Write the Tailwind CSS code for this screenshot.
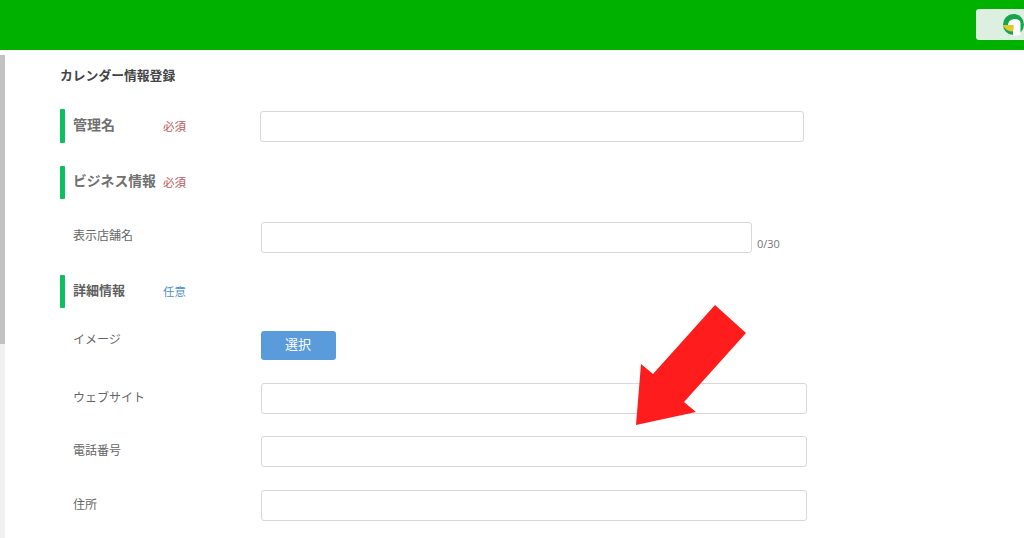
<!DOCTYPE html>
<html lang="ja">
<head>
    <meta charset="UTF-8">
    <meta name="viewport" content="width=device-width, initial-scale=1.0">
    <title>カレンダー情報登録</title>
    <script src="https://cdn.jsdelivr.net/npm/@tailwindcss/browser@4"></script>
</head>
<body class="relative h-[538px] w-[1024px] overflow-hidden bg-white font-['Noto_Sans_CJK_JP','Noto_Sans',sans-serif] text-[#666]">

    <!-- header -->
    <header class="flex h-[50px] items-start justify-end overflow-hidden bg-[#00b100] pt-[9px]">
        <div class="flex h-[31px] w-[48px] shrink-0 items-center rounded-l-[3px] bg-[#dcefe0] pl-[27px]">
            <svg class="shrink-0" width="21" height="23" viewBox="0 0 21 23">
                <circle cx="10.500" cy="11.500" r="10.500" fill="#14a64a"/>
                <path d="M5 12 C5 8 8.500 6 12 6 C15 6 17.500 7.500 17.500 10 L17.500 22 L10 23 L10 12 Z" fill="#fff"/>
                <path d="M0 12 L10.500 12 C11 14.500 10.500 17 9.500 18.500 C5 18.500 1.500 16 0 12Z" fill="#e3c82d"/>
            </svg>
        </div>
    </header>

    <div class="flex h-[488px]">
        <!-- scrollbar -->
        <div class="h-full w-[5px] shrink-0 pt-[5px]">
            <div class="h-full bg-[#f1f1f1]">
                <div class="h-[289px] bg-[#c2c2c2]"></div>
            </div>
        </div>

        <main class="pl-[55px]">
            <h1 class="mt-[16px] h-[18px] text-[12.800px] leading-[18px] font-bold text-[#444]">カレンダー情報登録</h1>

            <!-- 管理名 -->
            <div class="mt-[25px] flex h-[34px] items-center">
                <div class="h-[34px] w-[5px] rounded-[1px] bg-[#0cc05f]"></div>
                <div class="mb-[4px] ml-[8px] w-[90px] text-[14px] font-bold text-[#707070]">管理名</div>
                <div class="mt-[2px] w-[97px] text-[11.500px] text-[#c0585c]">必須</div>
                <input type="text" class="h-[31px] w-[544px] rounded-[3px] border border-[#d8d8d8] bg-white">
            </div>

            <!-- ビジネス情報 -->
            <div class="mt-[23px] flex h-[33px] items-center">
                <div class="h-[33px] w-[5px] rounded-[1px] bg-[#0cc05f]"></div>
                <div class="mb-[4px] ml-[8px] w-[90px] text-[13.800px] font-bold text-[#707070]">ビジネス情報</div>
                <div class="text-[11.500px] text-[#c0585c]">必須</div>
            </div>

            <!-- 表示店舗名 -->
            <div class="mt-[22px] flex h-[32px] items-center">
                <div class="mb-[4px] ml-[13px] w-[187.500px] text-[12px] text-[#666]">表示店舗名</div>
                <input type="text" class="h-[31px] w-[491.500px] rounded-[3px] border border-[#d8d8d8] bg-white">
                <span class="mt-[14px] ml-[5px] font-['Open_Sans',sans-serif] text-[11px] text-[#777]">0/30</span>
            </div>

            <!-- 詳細情報 -->
            <div class="mt-[22px] flex h-[33px] items-center">
                <div class="h-[33px] w-[5px] rounded-[1px] bg-[#0cc05f]"></div>
                <div class="mb-[4px] ml-[8px] w-[90px] text-[13px] font-bold text-[#5f5f5f]">詳細情報</div>
                <div class="text-[11.500px] text-[#4f8fc6]">任意</div>
            </div>

            <!-- イメージ -->
            <div class="mt-[23px] flex h-[29px] items-start">
                <div class="ml-[13px] w-[187.500px] text-[12px] leading-[16px] text-[#666]">イメージ</div>
                <button type="button" class="h-[29px] w-[75px] rounded-[3px] bg-[#5a9bdc] pb-[3px] text-[13px] text-white">選択</button>
            </div>

            <!-- ウェブサイト -->
            <div class="mt-[23px] flex h-[31px] items-center">
                <div class="mb-[4px] ml-[13px] w-[187.500px] text-[12px] text-[#666]">ウェブサイト</div>
                <input type="text" class="h-[31px] w-[546.500px] rounded-[3px] border border-[#d8d8d8] bg-white">
            </div>

            <!-- 電話番号 -->
            <div class="mt-[22px] flex h-[31px] items-center">
                <div class="mb-[4px] ml-[13px] w-[187.500px] text-[12px] text-[#666]">電話番号</div>
                <input type="text" class="h-[31px] w-[546.500px] rounded-[3px] border border-[#d8d8d8] bg-white">
            </div>

            <!-- 住所 -->
            <div class="mt-[23px] flex h-[31px] items-center">
                <div class="mb-[4px] ml-[13px] w-[187.500px] text-[12px] text-[#666]">住所</div>
                <input type="text" class="h-[31px] w-[546.500px] rounded-[3px] border border-[#d8d8d8] bg-white">
            </div>
        </main>
    </div>

    <!-- annotation arrow over the form -->
    <svg class="absolute top-0 left-0" width="1024" height="538" viewBox="0 0 1024 538">
        <polygon points="715,305 746,333 684,402 696,412 636,425 641,364 653,374" fill="#ff1c1c"/>
    </svg>

</body>
</html>
